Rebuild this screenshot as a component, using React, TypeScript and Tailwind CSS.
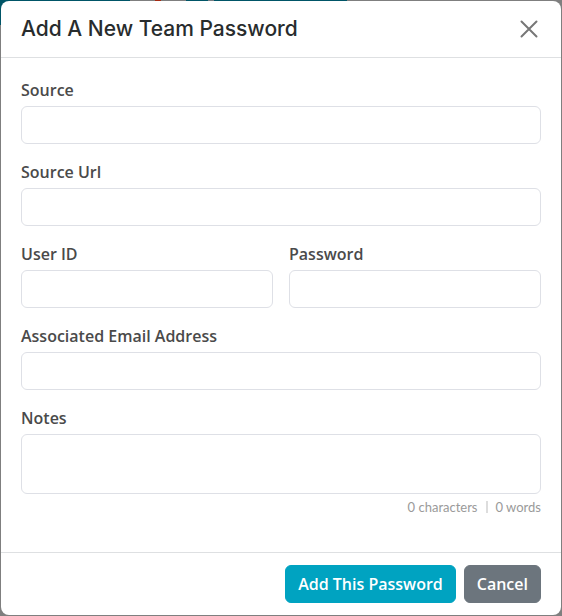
import { useState } from "react";
import type { InputHTMLAttributes } from "react";

type FieldProps = InputHTMLAttributes<HTMLInputElement> & { id: string; label: string };

const labelClass =
  "mb-1 block font-['Open_Sans','Liberation_Sans',sans-serif] text-base leading-6 font-semibold text-[#4a4a4a]";
const controlClass =
  "block w-full rounded-md border border-[#dee0e6] bg-white px-3 outline-none focus:border-[#00a3c1]";
const buttonClass =
  "h-[38px] rounded-md border px-3 font-['Open_Sans','Liberation_Sans',sans-serif] text-base leading-6 font-semibold text-white";

function Field({ id, label, ...rest }: FieldProps) {
  return (
    <div className="min-w-0">
      <label htmlFor={id} className={labelClass}>
        {label}
      </label>
      <input id={id} className={`${controlClass} h-[38px]`} {...rest} />
    </div>
  );
}

function Backdrop() {
  return (
    <div className="absolute inset-x-0 top-0 flex h-[25px]" aria-hidden="true">
      <div className="w-[130px] bg-[#005567]" />
      <div className="flex w-14 justify-center">
        <div className="h-1 w-1.5 bg-[#a52a12]" />
      </div>
      <div className="w-[22px] bg-[#005567]" />
      <div className="w-1.5 bg-[#7a7e84]" />
      <div className="w-[133px] bg-[#005567]" />
    </div>
  );
}

export default function App() {
  const [notes, setNotes] = useState("");
  const words = notes.trim() ? notes.trim().split(/\s+/).length : 0;

  return (
    <div className="relative bg-[#7f7f7f] p-px font-['Lato','Liberation_Sans',sans-serif]">
      <Backdrop />
      <form
        role="dialog"
        aria-labelledby="dialog-title"
        className="relative rounded-lg bg-white"
        onSubmit={(event) => event.preventDefault()}
      >
        <header className="flex h-[57px] items-center justify-between border-b border-[#dee0e2] px-5">
          <h1
            id="dialog-title"
            className="font-['Inter','Liberation_Sans',sans-serif] text-[21px] leading-7 font-medium text-[#282c2d]"
          >
            Add A New Team Password
          </h1>
          <button type="button" aria-label="Close" className="flex size-6 items-center justify-center">
            <svg viewBox="0 0 16 16" className="size-4 overflow-visible" fill="none" stroke="#777777" strokeWidth="2" strokeLinecap="round">
              <path d="M.5.5l15 15M15.5.5l-15 15" />
            </svg>
          </button>
        </header>

        <div className="flex flex-col gap-4 px-5 pt-5 pb-9">
          <Field id="source" label="Source" />
          <Field id="source-url" label="Source Url" />
          <div className="grid grid-cols-2 gap-4">
            <Field id="user-id" label="User ID" />
            <Field id="password" label="Password" type="password" />
          </div>
          <Field id="email" label="Associated Email Address" type="email" />
          <div>
            <label htmlFor="notes" className={labelClass}>
              Notes
            </label>
            <textarea
              id="notes"
              value={notes}
              onChange={(event) => setNotes(event.target.value)}
              className={`${controlClass} h-[60px] resize-none py-1.5`}
            />
            <div className="mt-1 flex items-center justify-end gap-2 text-[13px] leading-[18px] text-[#9a9a9a]">
              <span>{notes.length} characters</span>
              <span className="h-3 w-0.5 bg-[#dddddd]" />
              <span>{words} words</span>
            </div>
          </div>
        </div>

        <footer className="flex justify-end gap-2 border-t border-[#dee0e2] px-5 py-3">
          <button type="submit" className={`${buttonClass} border-[#00a3c1] bg-[#00a3c1]`}>
            Add This Password
          </button>
          <button type="button" className={`${buttonClass} border-[#6c757d] bg-[#6c757d]`}>
            Cancel
          </button>
        </footer>
      </form>
    </div>
  );
}
